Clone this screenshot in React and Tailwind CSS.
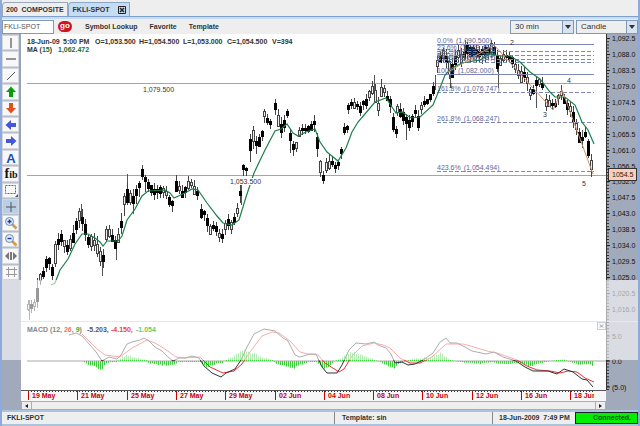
import { useState } from 'react';

const FONT = "font-['Liberation_Sans',Arial,sans-serif]";

// [x, high, low] of the price bars, one list for each run between gaps
const RUNS = [
  [[28, 302, 309], [35, 301, 310], [37, 280, 306], [38, 275, 282], [42, 271, 281], [46, 258, 272], [50, 258, 266], [53, 270, 283], [55, 243, 266], [58, 236, 250], [60, 231, 242], [64, 240, 250], [68, 243, 252], [72, 230, 245], [75, 224, 235], [80, 208, 222], [84, 216, 235], [88, 235, 245], [96, 237, 250], [100, 247, 262], [102, 262, 275], [104, 240, 255], [107, 222, 232], [110, 228, 238], [113, 235, 242], [116, 240, 251], [118, 232, 243], [122, 212, 230], [125, 188, 204], [127, 183, 204], [130, 191, 202], [134, 192, 206], [137, 187, 201], [140, 180, 190], [142, 168, 180], [145, 176, 188], [149, 183, 190], [152, 186, 198], [158, 188, 195], [162, 186, 197], [165, 187, 194], [168, 193, 205], [171, 198, 205], [173, 204, 215]],
  [[176, 177, 190], [180, 187, 195], [184, 190, 199], [187, 179, 192], [190, 180, 185], [193, 181, 191], [196, 187, 197], [199, 190, 199]],
  [[201, 206, 216], [204, 211, 219], [207, 218, 229], [210, 225, 234], [214, 223, 229], [218, 228, 238], [221, 236, 244], [224, 225, 235], [227, 212, 225], [230, 223, 234], [233, 216, 225], [236, 213, 220], [239, 192, 205], [242, 180, 190]],
  [[243, 165, 174], [247, 168, 173]],
  [[250, 137, 158], [252, 128, 152], [254, 131, 145], [257, 140, 152], [260, 133, 144], [262, 130, 138]],
  [[264, 111, 120], [267, 116, 123], [272, 122, 130]],
  [[275, 101, 113], [277, 110, 120], [280, 117, 136], [283, 121, 135], [286, 112, 121], [288, 107, 115]],
  [[290, 131, 150], [293, 143, 155], [297, 142, 150]],
  [[299, 128, 135], [301, 126, 133], [305, 127, 132], [309, 125, 132], [314, 119, 128], [316, 130, 148], [318, 142, 164], [320, 160, 174], [323, 173, 180], [326, 161, 171], [330, 157, 166], [333, 160, 168], [336, 167, 175], [339, 159, 163], [341, 148, 157], [342, 125, 135], [347, 126, 132]],
  [[348, 104, 112], [352, 99, 108], [356, 101, 107], [360, 105, 113], [364, 99, 109], [367, 96, 106], [370, 87, 96], [374, 79, 90], [376, 92, 108], [378, 99, 113], [381, 83, 95], [384, 86, 94], [387, 94, 100], [390, 97, 110], [392, 112, 130], [396, 128, 135]],
  [[397, 105, 114], [402, 106, 116], [405, 117, 133], [409, 118, 128], [412, 115, 124], [415, 109, 116], [418, 113, 130], [420, 106, 115], [423, 98, 107], [427, 99, 105], [430, 94, 102], [433, 85, 95], [435, 80, 89]],
  [[437, 57, 69], [441, 50, 60], [445, 48, 60], [448, 60, 76], [451, 62, 80], [454, 55, 70], [458, 47, 60], [462, 51, 64], [465, 44, 58], [470, 46, 60], [475, 46, 59], [480, 50, 62], [485, 46, 60], [490, 43, 55], [493, 40, 51], [497, 53, 70], [500, 57, 65], [504, 51, 57], [508, 55, 61], [512, 56, 64], [515, 62, 71], [519, 69, 79], [523, 66, 80], [527, 76, 87], [530, 87, 96], [533, 86, 94], [536, 79, 86], [540, 79, 85], [544, 83, 91]],
  [[546, 96, 107], [550, 98, 105], [554, 104, 110], [557, 98, 104], [560, 87, 95], [563, 92, 99], [566, 99, 111], [570, 106, 115], [573, 108, 125], [576, 120, 134], [580, 132, 145], [583, 138, 146]],
  [[585, 131, 137], [587, 134, 150], [590, 150, 171], [593, 172, 178]],
];

const WICKS = [[29, 300, 320], [81, 204, 220], [102, 262, 276], [103, 250, 266], [116, 245, 260], [127, 174, 190], [133, 195, 214], [142, 165, 180], [241, 183, 205], [374, 75, 90], [323, 176, 184], [406, 118, 140], [435, 75, 90], [450, 70, 88], [465, 40, 60], [498, 60, 88], [536, 84, 108], [561, 85, 96], [582, 130, 147]];

const MA = '51,285 55,283 60,270 68,259 75,244 82,234 88,234 95,238 100,242 103,246 107,241 118,241 122,236 127,220 135,209 142,196 148,191 165,190 170,193 174,198 185,193 192,189 198,190 207,203 217,216 223,223 232,225 239,220 246,197 254,173 265,150 275,131 281,129 287,124 293,133 298,136 306,132 315,129 320,142 327,152 338,161 346,148 352,132 358,122 370,108 375,102 386,98 392,107 396,113 402,112 411,118 420,117 433,105 440,88 445,75 452,68 462,63 480,60 490,54 500,56 510,56 520,62 530,72 540,79 550,92 555,97 565,97 575,105 582,122 588,130 594,144';
const MACD = '69,335 76,333 82,336 90,345 96,352 102,361 109,357 117,359 121,355 127,344 132,342 140,340 144,338 149,341 155,347 162,351 168,357 173,361 179,358 185,358 192,356 199,358 204,366 212,373 221,377 226,373 235,369 241,360 247,347 254,334 264,329 275,331 283,338 288,341 295,355 300,357 310,354 316,354 322,367 327,373 337,373 342,365 349,350 356,343 366,344 374,342 378,345 386,348 391,354 395,363 402,362 408,365 415,364 423,360 433,353 440,342 446,338 450,343 457,343 465,347 472,351 486,354 494,352 503,357 516,361 525,367 533,371 541,371 548,371 557,374 564,369 573,372 582,379 587,380 593,387';
const SIGNAL = '82,334 89,341 97,349 105,355 120,357 132,348 147,340 155,343 165,349 176,357 185,358 200,357 210,367 223,373 234,371 242,364 250,352 262,336 272,332 279,333 290,341 300,352 308,354 318,355 325,363 339,372 344,369 352,356 362,346 374,343 383,345 390,348 400,358 410,363 420,363 432,357 446,344 463,344 474,347 487,351 497,353 517,360 527,366 537,370 550,371 560,373 568,371 577,372 585,378 594,382';
// positive values hang below the zero line
const HIST = [[84, 1], [88, 4], [95, 5], [101, 9], [105, 3], [110, 1], [117, 1], [119, -2], [126, -7], [133, -4], [146, -1], [148, 2], [158, 4], [172, 5], [178, 1], [200, 1], [205, 6], [213, 4], [222, 2], [225, -1], [232, -4], [244, -12], [252, -8], [262, -4], [272, -1], [276, 3], [284, 5], [293, 9], [300, 4], [308, 1], [317, 1], [323, 9], [327, 7], [333, 1], [340, -3], [350, -10], [358, -8], [370, -3], [380, 1], [393, 8], [400, 2], [412, -2], [430, -4], [440, -8], [450, -1], [460, 1], [480, 3], [492, 1], [500, 3], [518, 2], [530, 5], [545, 1], [562, -2], [570, 1], [580, 4], [586, 3], [593, 5]];

const FIB = [
  { pct: '0.0%', price: '1,090.500', y: 44, solid: true },
  { pct: '23.6%', price: '1,088.494', y: 51 },
  { pct: '38.2%', price: '1,087.253', y: 55 },
  { pct: '50.0%', price: '1,086.250', y: 59 },
  { pct: '61.8%', price: '1,085.247', y: 62 },
  { pct: '100%', price: '1,082.000', y: 74, solid: true },
  { pct: '161.8%', price: '1,076.747', y: 92 },
  { pct: '261.8%', price: '1,068.247', y: 122 },
  { pct: '423.6%', price: '1,054.494', y: 171 },
];

const PRICES = ['1,092.5', '1,088.0', '1,083.5', '1,079.0', '1,074.5', '1,070.0', '1,065.5', '1,061.0', '1,056.5', '1,052.0', '1,047.5', '1,043.0', '1,038.5', '1,034.0', '1,029.5', '1,025.0', '1,020.5', '1,016.0'];
const DATES = ['19 May', '21 May', '25 May', '27 May', '29 May', '02 Jun', '04 Jun', '08 Jun', '10 Jun', '12 Jun', '16 Jun', '18 Jun'];
const WAVES = [['1', 449, 88], ['2', 510, 45], ['3', 543, 117], ['4', 567, 83], ['5', 582, 186]];

const noise = (n) => Math.abs(Math.sin(n * 12.9898) * 43758.5453) % 1;

// linear interpolation of column k at x
function at(points, x, k) {
  const i = points.findIndex((p) => p[0] >= x);
  if (i <= 0) return points[0][k];
  const [a, b] = [points[i - 1], points[i]];
  return a[k] + ((b[k] - a[k]) * (x - a[0])) / (b[0] - a[0]);
}

function steps(points, step) {
  const out = [];
  for (let x = points[0][0]; x <= points[points.length - 1][0]; x += step) out.push(x);
  return out;
}

function Candles() {
  return (
    <g>
      {WICKS.map(([x, a, b]) => <path key={x} d={`M${x + 0.5} ${a}V${b}`} stroke="#555" />)}
      {RUNS.flatMap((run) => steps(run, 3).map((x) => {
        const hi = at(run, x, 1);
        const lo = at(run, x, 2);
        const size = lo - hi;
        const top = Math.round(hi + size * 0.35 * noise(x));
        const h = Math.max(2, Math.round(size * (0.4 + 0.5 * noise(x + 7))));
        const hollow = noise(x + 3) > 0.65;
        return (
          <g key={x}>
            <path d={`M${x + 0.5} ${Math.round(hi - 4 * noise(x + 1))}V${Math.round(lo + 4 * noise(x + 5))}`} stroke="#444" />
            {hollow
              ? <rect x={x - 0.5} y={top + 0.5} width="2" height={h} fill="#eee" stroke="#444" />
              : <rect x={x - 1} y={top} width="3" height={h} fill="#000" />}
          </g>
        );
      }))}
    </g>
  );
}

function Chart() {
  return (
    <svg viewBox="21 34 617 367" className={`block w-full ${FONT}`} fontSize="7" fill="none">
      <rect x="21" y="34" width="586" height="367" fill="#fff" />
      <rect x="606" y="34" width="32" height="367" fill="#a0aaba" />

      {/* header */}
      <g fontWeight="bold" fill="#333">
        <text x="27" y="44">18-Jun-09</text>
        <text x="63" y="44">5:00 PM</text>
        <text x="95" y="44">O=1,053.500</text>
        <text x="139" y="44">H=1,054.500</text>
        <text x="183" y="44">L=1,053.000</text>
        <text x="227" y="44">C=1,054.500</text>
        <text x="272" y="44">V=394</text>
        <text x="27" y="52">MA (<tspan fill="#0f7038">15</tspan>)</text>
        <text x="58" y="52" fill="#0f7038">1,062.472</text>
      </g>

      <path d="M27 83.5H606M27 175.5H606" stroke="#c99a80" />
      <Candles />

      {/* fibonacci levels */}
      {FIB.map((f) => (
        <g key={f.pct}>
          <path d={`M437 ${f.y + 0.5}H594`} stroke="#7d88b5" strokeDasharray={f.solid ? undefined : '4 2'} />
          <text x="437" y={f.y - 1} fill="#5d6899">{f.pct}<tspan dx="3">({f.price})</tspan></text>
        </g>
      ))}
      <polyline points={MA} stroke="#1b7f49" strokeWidth="1.2" />
      <path d="M448 72L494 45L553 110L562 90L593 174" stroke="#cf8f68" />
      <g fill="#333">
        {WAVES.map(([n, x, y]) => <text key={n} x={x} y={y}>{n}</text>)}
        <text x="143" y="92">1,079.500</text>
        <rect x="229" y="178" width="33" height="7" fill="#fff" />
        <text x="230" y="184">1,053.500</text>
      </g>

      {/* MACD */}
      <rect x="21" y="321" width="617" height="1" fill="#b4c8e0" />
      <path d="M27 361H606" stroke="#aaa" />
      {steps(HIST, 2).map((x) => {
        const v = at(HIST, x, 1);
        return <path key={x} d={`M${x + 0.5} 361V${361 + v * (0.75 + 0.4 * noise(x))}`} stroke="#41cf41" />;
      })}
      <polyline points={SIGNAL} stroke="#f03030" />
      <polyline points={MACD} stroke="#333" />

      {/* price axis */}
      <path d="M606.5 34V390" stroke="#333" />
      <path d="M608 38V390" stroke="#333" strokeWidth="2" strokeDasharray="1 2.19" />
      {PRICES.map((p, i) => (
        <g key={p}>
          <path d={`M607 ${Math.round(38 + i * 15.94) + 0.5}h3`} stroke="#222" />
          <text x="612" y={Math.round(41 + i * 15.94)} fill="#111">{p}</text>
        </g>
      ))}
      {[['5.0', 336], ['0.0', 361], ['(5.0)', 387]].map(([t, y]) => (
        <g key={t}>
          <path d={`M607 ${y}h3`} stroke="#222" />
          <text x="612" y={y + 3} fill="#111">{t}</text>
        </g>
      ))}
      <rect x="608.5" y="168.5" width="28" height="12" fill="#fccfb6" stroke="#333" />
      <text x="612" y="177" fill="#222">1054.5</text>

      <rect x="21" y="280" width="617" height="80" fill="#fff" opacity=".6" />
      <g fontWeight="bold" fill="#888">
        <text x="27" y="332">MACD (12, <tspan fill="#f47070">26</tspan>, <tspan fill="#30b030">9</tspan>)</text>
        <text x="87" y="332" fill="#555">-5.203,</text>
        <text x="111" y="332" fill="#f04040">-4.150,</text>
        <text x="136" y="332" fill="#60d060">-1.054</text>
      </g>
      <g stroke="#999">
        <rect x="597.5" y="322.5" width="8" height="7" fill="#f8f8f8" stroke="#c5cedb" />
        <path d="M600 324.5l3 3m0-3l-3 3" />
      </g>

      {/* date axis */}
      <rect x="21" y="391" width="585" height="10" fill="#f7f7f7" />
      <path d="M21 390.5H606" stroke="#555" />
      <path d="M28 391.5H594" stroke="#333" strokeDasharray="1 2" />
      {DATES.map((d, i) => (
        <g key={d}>
          <path d={`M${Math.round(28 + i * 49.3) + 0.5} 391V400`} stroke="#c00" />
          <text x={Math.round(32 + i * 49.3)} y="398" fontWeight="bold" fill="#c00010">{d}</text>
        </g>
      ))}
      <rect x="594" y="392" width="12" height="8" fill="#f7f7f7" />
    </svg>
  );
}

const ARROW = 'M8 2.5L13 8h-3v5H6V8H3z';
const TOOLS = [
  ['Vertical line', <path d="M8 3v10" stroke="#333" />],
  ['Horizontal line', <path d="M3 8h10" stroke="#333" />],
  ['Trend line', <path d="M4 12l8-8" stroke="#555" />],
  ['Up arrow', <path d={ARROW} fill="#08a008" />],
  ['Down arrow', <path d={ARROW} fill="#e0501a" transform="rotate(180 8 8)" />],
  ['Left arrow', <path d={ARROW} fill="#4456dc" transform="rotate(-90 8 8)" />],
  ['Right arrow', <path d={ARROW} fill="#4456dc" transform="rotate(90 8 8)" />],
  ['Text', <text x="8" y="13" textAnchor="middle" fontSize="13" fontWeight="bold" fill="#1450b8">A</text>],
  ['Fibonacci', <text x="8" y="12" textAnchor="middle" fontSize="10" fontWeight="bold" fill="#111" fontFamily="Liberation Serif, serif"><tspan fontSize="14">f</tspan>ib</text>],
  ['Select area', <><rect x="2.5" y="3.5" width="10" height="8" stroke="#666" strokeDasharray="2 1" /><path d="M15 12v3h-3z" fill="#555" /></>],
  ['Crosshair', <path d="M8 3v10M3 8h10" stroke="#555" />],
  ['Zoom in', <><path d="M9 9l4.5 4.5" stroke="#d89a48" strokeWidth="2.6" /><circle cx="6.5" cy="6.5" r="4" fill="#dcecfa" stroke="#6c8bb0" /><path d="M6.5 4.5v4M4.5 6.5h4" stroke="#2030b0" strokeWidth="1.4" /></>],
  ['Zoom out', <><path d="M9 9l4.5 4.5" stroke="#d89a48" strokeWidth="2.6" /><circle cx="6.5" cy="6.5" r="4" fill="#dcecfa" stroke="#6c8bb0" /><path d="M4.5 6.5h4" stroke="#2030b0" strokeWidth="1.4" /></>],
  ['Stretch', <><path d="M6 4v8L2 8zM10 4v8l4-4z" fill="#777" /><path d="M8 4v8" stroke="#777" strokeWidth="2" /></>],
  ['Grid', <path d="M5.5 3v10M11.5 3v10M3 5.5h11M3 10.5h11" stroke="#999" />],
];

function Toolbox() {
  const [tool, setTool] = useState('Crosshair');
  return (
    <div className="w-[19px] shrink-0 flex flex-col bg-[#a0aaba]">
      <div className="h-[246px] flex flex-col gap-px bg-[#b5bfce] border-r-2 border-[#98a4b8] pt-px">
        {TOOLS.map(([name, icon]) => (
          <button key={name} aria-label={name} onClick={() => setTool(name)} className={`flex-1 min-h-0 flex items-center justify-center border border-[#d4d8de] ${tool === name ? 'bg-[#b8cfe5]' : 'bg-[#f8f8f8]'}`}>
            <svg viewBox="0 0 16 16" className={`size-4 shrink-0 ${FONT}`} fill="none">{icon}</svg>
          </button>
        ))}
      </div>
      <div className="h-20 bg-[#d9dde3]" />
    </div>
  );
}

function Picker({ label, options, className }) {
  return (
    <div className={`relative h-[14px] ${className}`}>
      <select aria-label={label} className="block w-full h-full appearance-none border border-[#8298b4] bg-[#eee] pl-1 text-[8px] leading-[10px] font-normal text-[#333]">
        {options.map((o) => <option key={o}>{o}</option>)}
      </select>
      <span className="pointer-events-none absolute inset-y-0 right-0 w-3 border border-[#8298b4] bg-[#d6e3f0] flex items-center justify-center">
        <svg viewBox="0 0 6 4" className="w-[6px] h-1"><path d="M0 0h6L3 4z" fill="#333" /></svg>
      </span>
    </div>
  );
}

export default function App() {
  const [symbol, setSymbol] = useState('FKLI-SPOT');

  return (
    <div className={`min-h-screen flex flex-col bg-[#eee] border-x-2 border-[#8eaadb] text-[7px] leading-[8px] text-[#333] ${FONT}`}>
      <div className="h-[17px] flex items-end border-b border-[#7f9fc8] font-bold">
        <button className="h-[14px] px-[3px] border border-b-0 border-[#9aa8bb] rounded-tl-sm whitespace-pre">200  COMPOSITE</button>
        <button className="h-[14px] pl-1 pr-[3px] flex items-center gap-2 border border-b-0 border-[#8ba6c8] rounded-tl-sm bg-[#c6dcf2]">
          FKLI-SPOT
          <svg viewBox="0 0 8 8" className="size-2" fill="none" stroke="#222"><path d="M.5.5h7v7h-7z" /><path d="M2 2l4 4m0-4l-4 4" strokeWidth="1.5" /></svg>
        </button>
      </div>

      <div className="h-[17px] flex items-center border-t-2 border-[#c6dcf2] font-bold">
        <input aria-label="Symbol" value={symbol} onChange={(e) => setSymbol(e.target.value)} className="w-[52px] h-[14px] px-px border border-[#8298b4] bg-white text-[7px] font-normal text-[#555]" />
        <button aria-label="Go" className="ml-1 w-[14px] h-[11px] rounded-full bg-[#cc1522] text-white text-[8px] leading-[8px] pb-px">go</button>
        <nav className="ml-[13px] flex gap-3">
          <button>Symbol Lookup</button>
          <button>Favorite</button>
          <button>Template</button>
        </nav>
        <div className="ml-auto flex gap-[2px]">
          <Picker label="Interval" options={['30 min', '60 min', 'Daily']} className="w-16" />
          <Picker label="Chart type" options={['Candle', 'Bar', 'Line']} className="w-[62px]" />
        </div>
      </div>

      <div className="flex">
        <Toolbox />
        <div className="flex-1 min-w-0"><Chart /></div>
      </div>

      <div className="h-[9px] flex bg-[#a0aaba] pl-[19px] pr-8">
        <div className="flex-1 flex justify-between border border-[#9ab0c8] bg-[#eee]">
          <button aria-label="Scroll left" className="w-[10px] border-r border-[#9ab0c8] flex items-center justify-center"><svg viewBox="0 0 3 4" className="w-[3px] h-1"><path d="M3 0v4L0 2z" fill="#222" /></svg></button>
          <button aria-label="Scroll right" className="w-[10px] border-l border-[#9ab0c8] flex items-center justify-center"><svg viewBox="0 0 3 4" className="w-[3px] h-1"><path d="M0 0v4l3-2z" fill="#222" /></svg></button>
        </div>
      </div>

      <footer className="flex-1 border-y-2 border-[#a9c4de] flex items-stretch font-bold">
        <div className="flex-1 pl-[5px] flex items-center border-r border-[#888]">FKLI-SPOT</div>
        <div className="w-[158px] pl-[7px] flex items-center border-r border-[#888]">Template: sin</div>
        <div className="w-[82px] pl-[6px] flex items-center">18-Jun-2009&nbsp; 7:49 PM</div>
        <div className="w-[63px] pr-[6px] flex items-center justify-end border border-[#222] bg-[#00f000] text-[#074a07]">Connected.</div>
      </footer>
    </div>
  );
}
